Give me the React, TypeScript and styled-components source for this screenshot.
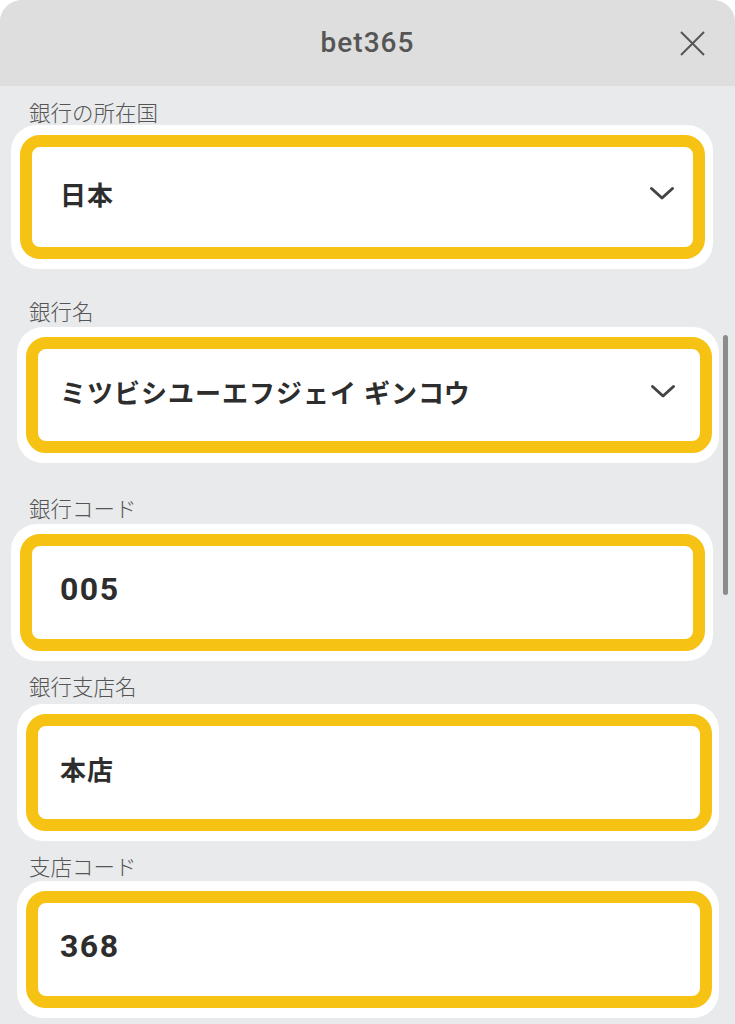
import React from 'react';
import styled, {createGlobalStyle} from 'styled-components';

const GlobalStyle = createGlobalStyle`
  html, body {
    margin: 0;
    padding: 0;
    background: #ffffff;
    overflow: hidden;
  }
  body {
    font-family: "Noto Sans CJK JP", "Noto Sans", sans-serif;
  }
`;

const Sheet = styled.div`
  position: relative;
  width: 735px;
  height: 1024px;
  background: #e9eaec;
  border-radius: 22px 22px 0 0;
  overflow: hidden;
`;
const Header = styled.div`
  position: relative;
  height: 86px;
  background: #dedede;
  display: flex;
  align-items: center;
  justify-content: center;
`;
const Title = styled.div`
  font-family: Roboto, "Liberation Sans", sans-serif;
  font-weight: 500;
  font-size: 28px;
  letter-spacing: 1px;
  color: #555555;
  margin-top: -2px;
`;
const CloseButton = styled.div`
  position: absolute;
  right: 30px;
  top: 31px;
  width: 25px;
  height: 25px;
  display: flex;
`;
const Content = styled.div`
  display: flex;
  flex-direction: column;
`;
const Field = styled.div<{$gap: number}>`
  display: flex;
  flex-direction: column;
  margin-top: ${p => p.$gap}px;
`;
const Label = styled.div<{$gap: number}>`
  font-size: 21.5px;
  font-weight: 300;
  line-height: 22px;
  color: #555555;
  padding-left: 29px;
  margin-bottom: ${p => p.$gap}px;
`;
const Card = styled.div<{$shift: 'a' | 'b'}>`
  width: 702px;
  box-sizing: border-box;
  margin-left: ${p => (p.$shift === 'a' ? 11 : 17)}px;
  padding: 10px ${p => (p.$shift === 'a' ? 8 : 7)}px 10px 9px;
  background: #ffffff;
  border-radius: 26px;
`;
const Box = styled.div<{$shift: 'a' | 'b', $h: number}>`
  height: ${p => p.$h - 8}px;
  border: 12px solid #f6c315;
  border-radius: 20px;
  background: #ffffff;
  display: flex;
  align-items: center;
  justify-content: space-between;
  padding: 0 ${p => (p.$shift === 'a' ? 18 : 24)}px 8px ${p => (p.$shift === 'a' ? 28 : 22)}px;
`;
const Value = styled.div<{$numeric?: boolean}>`
  font-weight: 700;
  color: #2d2d2d;
  font-family: ${p => (p.$numeric ? 'Roboto, "Liberation Sans", sans-serif' : '"Noto Sans CJK JP", "Noto Sans", sans-serif')};
  font-size: ${p => (p.$numeric ? 32 : 26)}px;
  letter-spacing: ${p => (p.$numeric ? 1.5 : 1)}px;
  white-space: pre;
`;
const Scrollbar = styled.div`
  position: absolute;
  right: 7px;
  top: 335px;
  width: 5px;
  height: 260px;
  border-radius: 3px;
  background: #8c8c8c;
`;

type FieldData = {
    label: string,
    value: string,
    select?: boolean,
    numeric?: boolean,
    shift: 'a' | 'b',
    gap: number,
    labelGap: number,
    height: number
}

const fields: FieldData[] = [
    {label: '銀行の所在国', value: '日本', select: true, shift: 'a', gap: 15, labelGap: 2, height: 100},
    {label: '銀行名', value: 'ミツビシユーエフジェイ ギンコウ', select: true, shift: 'b', gap: 31, labelGap: 5, height: 92},
    {label: '銀行コード', value: '005', numeric: true, shift: 'a', gap: 34, labelGap: 5, height: 93},
    {label: '銀行支店名', value: '本店', shift: 'b', gap: 14, labelGap: 7, height: 93},
    {label: '支店コード', value: '368', numeric: true, shift: 'b', gap: 14, labelGap: 4, height: 93},
];

function Chevron() {
    return (
        <svg width="26" height="15" viewBox="0 0 26 15">
            <polyline points="2.5,2.5 13,12 23.5,2.5" fill="none" stroke="#444" strokeWidth="3"
                      strokeLinecap="round" strokeLinejoin="round"/>
        </svg>
    )
}

export default function App() {
    return (
        <>
            <GlobalStyle/>
            <Sheet>
                <Header>
                    <Title>bet365</Title>
                    <CloseButton>
                        <svg width="25" height="25" viewBox="0 0 25 25">
                            <path d="M1 1 L24 24 M24 1 L1 24" stroke="#555" strokeWidth="2" fill="none"/>
                        </svg>
                    </CloseButton>
                </Header>
                <Content>
                    {fields.map(f => (
                        <Field key={f.label} $gap={f.gap}>
                            <Label $gap={f.labelGap}>{f.label}</Label>
                            <Card $shift={f.shift}>
                                <Box $shift={f.shift} $h={f.height}>
                                    <Value $numeric={f.numeric}>{f.value}</Value>
                                    {f.select && <Chevron/>}
                                </Box>
                            </Card>
                        </Field>
                    ))}
                </Content>
                <Scrollbar/>
            </Sheet>
        </>
    );
}
